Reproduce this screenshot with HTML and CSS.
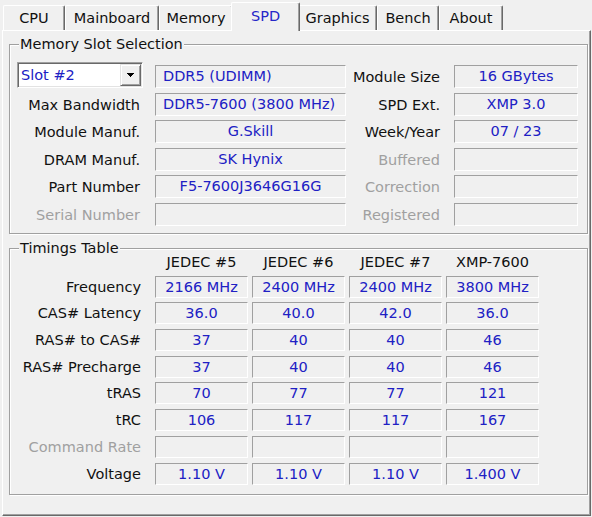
FILE: index.html
```html
<!DOCTYPE html>
<html>
<head>
<meta charset="utf-8">
<link rel="stylesheet" href="styles.css">
</head>
<body>
<div class="tabs">
  <div class="tab t-cpu">CPU</div>
  <div class="tab t-main">Mainboard</div>
  <div class="tab t-mem">Memory</div>
  <div class="tab t-spd sel">SPD</div>
  <div class="tab t-gfx">Graphics</div>
  <div class="tab t-bench">Bench</div>
  <div class="tab t-about">About</div>
</div>
<div class="panel">
  <div class="group g1">
    <span class="legend">Memory Slot Selection</span>
    <div class="sgrid">
      <div class="combo">
        <span class="combo-text">Slot #2</span>
        <span class="btn"><svg width="7" height="4" viewBox="0 0 7 4"><path d="M0 0h7v1h-1v1h-1v1h-1v1h-1v-1h-1v-1h-1v-1h-1z" fill="#000"/></svg></span>
      </div>
      <div class="field left">DDR5 (UDIMM)</div>
      <div class="lbl">Module Size</div>
      <div class="field">16 GBytes</div>

      <div class="lbl">Max Bandwidth</div>
      <div class="field left">DDR5-7600 (3800 MHz)</div>
      <div class="lbl">SPD Ext.</div>
      <div class="field">XMP 3.0</div>

      <div class="lbl">Module Manuf.</div>
      <div class="field">G.Skill</div>
      <div class="lbl">Week/Year</div>
      <div class="field">07 / 23</div>

      <div class="lbl">DRAM Manuf.</div>
      <div class="field">SK Hynix</div>
      <div class="lbl dis">Buffered</div>
      <div class="field"></div>

      <div class="lbl">Part Number</div>
      <div class="field">F5-7600J3646G16G</div>
      <div class="lbl dis">Correction</div>
      <div class="field"></div>

      <div class="lbl dis">Serial Number</div>
      <div class="field"></div>
      <div class="lbl dis">Registered</div>
      <div class="field"></div>
    </div>
  </div>

  <div class="group g2">
    <span class="legend">Timings Table</span>
    <div class="tgrid">
      <div></div>
      <div class="hdr">JEDEC #5</div>
      <div class="hdr">JEDEC #6</div>
      <div class="hdr">JEDEC #7</div>
      <div class="hdr">XMP-7600</div>

      <div class="tlbl">Frequency</div>
      <div class="cell">2166 MHz</div>
      <div class="cell">2400 MHz</div>
      <div class="cell">2400 MHz</div>
      <div class="cell">3800 MHz</div>

      <div class="tlbl">CAS# Latency</div>
      <div class="cell">36.0</div>
      <div class="cell">40.0</div>
      <div class="cell">42.0</div>
      <div class="cell">36.0</div>

      <div class="tlbl">RAS# to CAS#</div>
      <div class="cell">37</div>
      <div class="cell">40</div>
      <div class="cell">40</div>
      <div class="cell">46</div>

      <div class="tlbl">RAS# Precharge</div>
      <div class="cell">37</div>
      <div class="cell">40</div>
      <div class="cell">40</div>
      <div class="cell">46</div>

      <div class="tlbl">tRAS</div>
      <div class="cell">70</div>
      <div class="cell">77</div>
      <div class="cell">77</div>
      <div class="cell">121</div>

      <div class="tlbl">tRC</div>
      <div class="cell">106</div>
      <div class="cell">117</div>
      <div class="cell">117</div>
      <div class="cell">167</div>

      <div class="tlbl dis">Command Rate</div>
      <div class="cell"></div>
      <div class="cell"></div>
      <div class="cell"></div>
      <div class="cell"></div>

      <div class="tlbl">Voltage</div>
      <div class="cell">1.10 V</div>
      <div class="cell">1.10 V</div>
      <div class="cell">1.10 V</div>
      <div class="cell">1.400 V</div>
    </div>
  </div>
</div>
</body>
</html>
```
FILE: styles.css
```css
html, body {
  margin: 0;
  padding: 0;
}
body {
  background: #f0f0f0;
  font-family: "DejaVu Sans", "Liberation Sans", Arial, sans-serif;
  font-size: 14.5px;
  color: #111;
  width: 592px;
  height: 517px;
  overflow: hidden;
}

/* ---- tabs ---- */
.tabs {
  display: flex;
  align-items: flex-end;
  height: 30px;
  padding-left: 3px;
  box-sizing: border-box;
}
.tab {
  height: 25px;
  box-sizing: border-box;
  border-top: 1px solid #fff;
  border-left: 1px solid #fff;
  border-right: 1px solid #696969;
  box-shadow: inset -1px 0 #a0a0a0;
  border-radius: 2px 2px 0 0;
  display: flex;
  align-items: center;
  justify-content: center;
  background: #f0f0f0;
  white-space: nowrap;
}
.t-cpu { width: 62px; }
.t-main { width: 94px; }
.t-mem { width: 74px; }
.t-spd { width: 69px; }
.t-gfx { width: 79px; }
.t-bench { width: 62px; }
.t-about { width: 64px; }
.tab.sel {
  height: 29px;
  margin: 0 -2px -1px -2px;
  position: relative;
  z-index: 1;
  color: #2626c8;
  padding-bottom: 2px;
}

/* ---- panel ---- */
.panel {
  margin-left: 2px;
  width: 589px;
  height: 486px;
  box-sizing: border-box;
  border-top: 1px solid #fff;
  border-left: 1px solid #fff;
  border-right: 1px solid #696969;
  border-bottom: 1px solid #696969;
  box-shadow: inset -1px -1px #a0a0a0;
  padding: 13px 0 0 6px;
}

.group {
  position: relative;
  width: 579px;
  box-sizing: border-box;
  border: 1px solid #a0a0a0;
  box-shadow: 1px 1px 0 #fff, inset 1px 1px 0 #fff;
}
.g1 {
  height: 190px;
  padding: 20px 0 0 7px;
}
.g2 {
  height: 247px;
  margin-top: 14px;
  padding: 4px 0 0 7px;
}
.legend {
  position: absolute;
  left: 9px;
  top: -9px;
  line-height: 16px;
  padding: 0 1px;
  background: #f0f0f0;
  white-space: nowrap;
}

/* ---- slot grid ---- */
.sgrid {
  display: grid;
  grid-template-columns: 138px 191px 108px 124px;
  grid-auto-rows: 23px;
  row-gap: 4.6px;
}
.lbl {
  text-align: right;
  line-height: 24px;
  white-space: nowrap;
  padding-right: 14px;
}
.sgrid > .lbl:nth-child(4n+1) {
  padding-right: 15px;
}
.dis {
  color: #a0a0a0;
}
.field, .cell {
  box-sizing: border-box;
  border-top: 1px solid #a0a0a0;
  border-left: 1px solid #a0a0a0;
  border-bottom: 1px solid #fff;
  border-right: 1px solid #fff;
  color: #2020c4;
  text-align: center;
  white-space: nowrap;
  overflow: hidden;
}
.field {
  line-height: 21px;
}
.field.left {
  text-align: left;
  padding-left: 7px;
}

/* ---- combo ---- */
.combo {
  width: 126px;
  height: 26px;
  margin-top: -3px;
  box-sizing: border-box;
  border-top: 1px solid #a0a0a0;
  border-left: 1px solid #a0a0a0;
  border-right: 1px solid #fff;
  border-bottom: 1px solid #fff;
  box-shadow: inset 1px 1px 0 #696969, inset -1px -1px 0 #e3e3e3;
  background: #fff;
  padding: 1px;
  display: flex;
}
.combo-text {
  flex: 1;
  color: #2020c4;
  line-height: 22px;
  padding-left: 2px;
}
.btn {
  width: 21px;
  height: 22px;
  box-sizing: border-box;
  background: #f0f0f0;
  border-top: 1px solid #e3e3e3;
  border-left: 1px solid #e3e3e3;
  border-right: 1px solid #696969;
  border-bottom: 1px solid #696969;
  box-shadow: inset 1px 1px 0 #fff, inset -1px -1px 0 #a0a0a0;
  display: flex;
  align-items: center;
  justify-content: center;
}
.btn svg {
  display: block;
}

/* ---- timings grid ---- */
.tgrid {
  display: grid;
  grid-template-columns: 134px 93px 93px 93px 93px;
  grid-template-rows: 18px repeat(8, 22px);
  column-gap: 4px;
  row-gap: 4.7px;
}
.hdr {
  text-align: center;
  line-height: 18px;
  white-space: nowrap;
}
.tlbl {
  text-align: right;
  padding-right: 10px;
  line-height: 22px;
  white-space: nowrap;
}
.cell {
  line-height: 20px;
}
```
